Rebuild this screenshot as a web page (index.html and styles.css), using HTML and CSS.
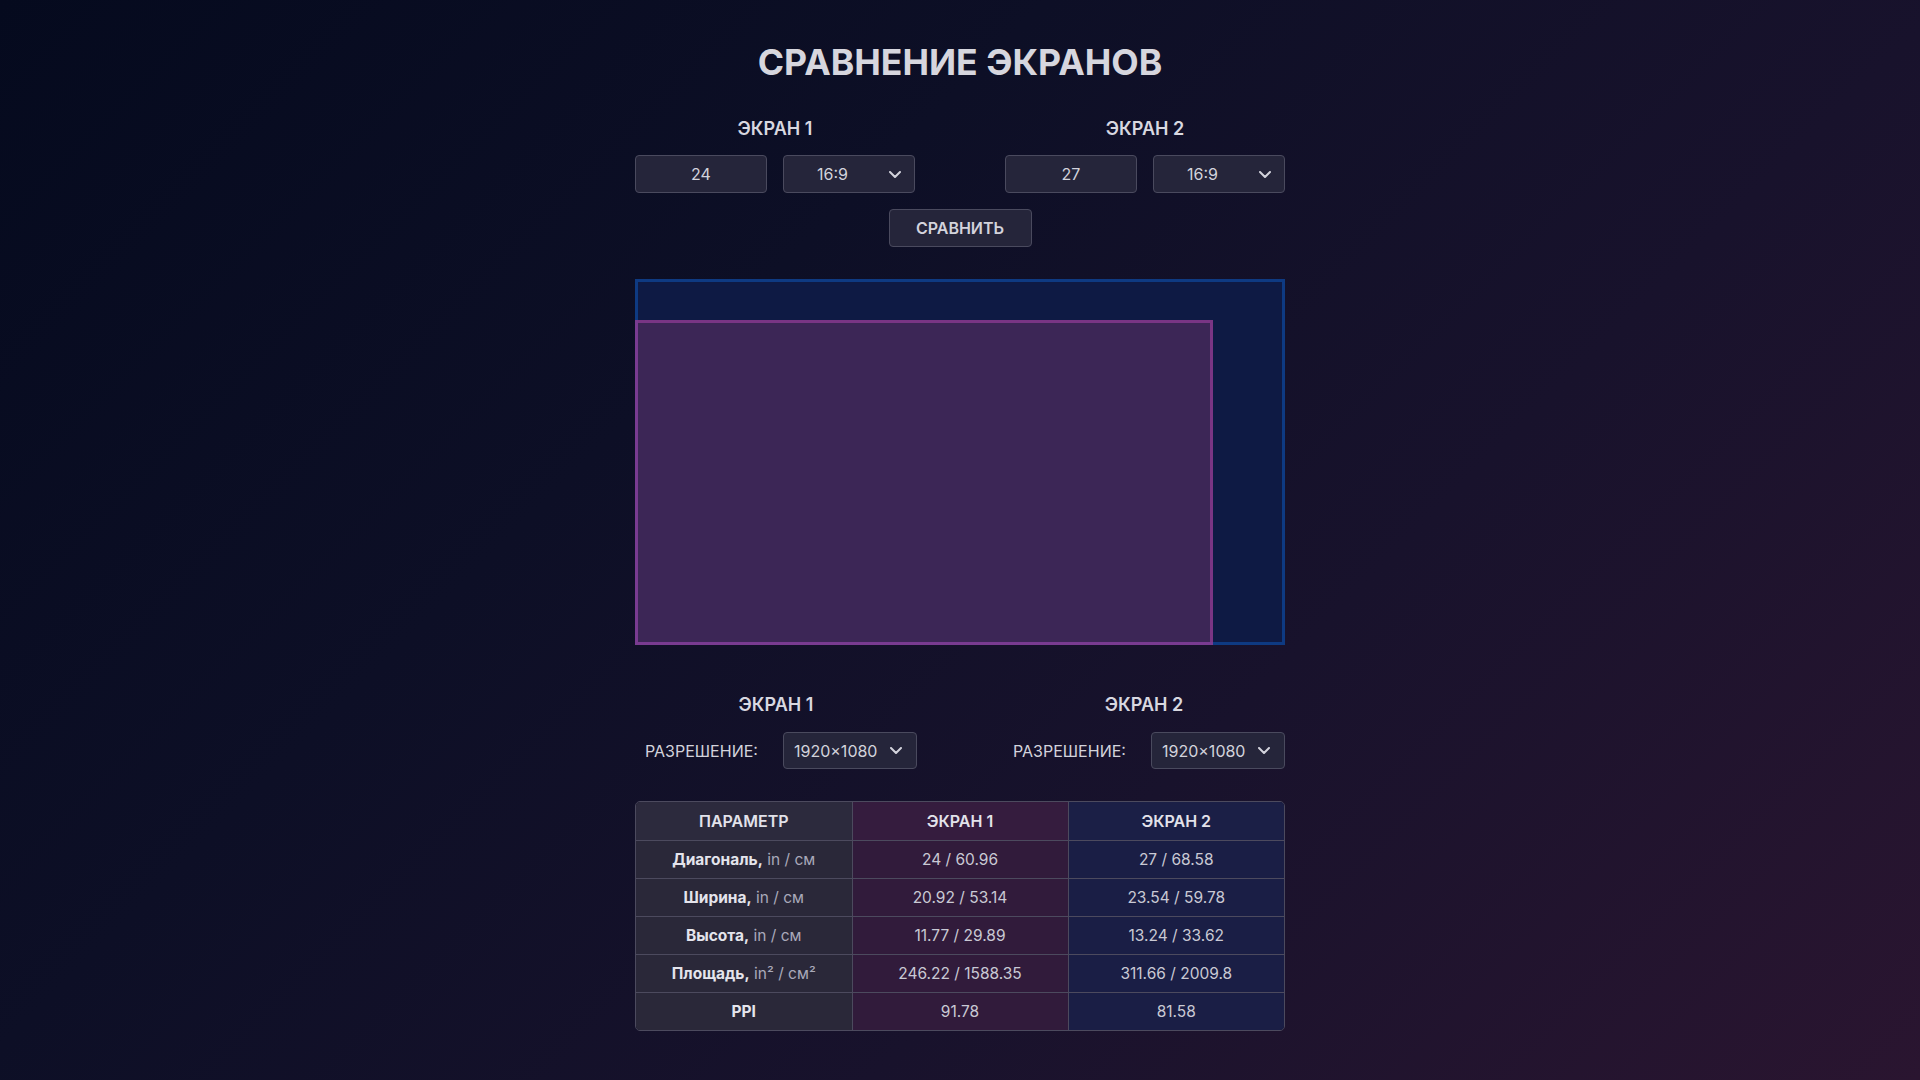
FILE: index.html
```html
<!DOCTYPE html>
<html lang="ru">
<head>
<meta charset="utf-8">
<title>Сравнение экранов</title>
<link rel="stylesheet" href="styles.css">
</head>
<body>
<main class="page">
  <h1 class="title">СРАВНЕНИЕ ЭКРАНОВ</h1>

  <section class="inputs">
    <div class="screen-col">
      <div class="col-label">ЭКРАН 1</div>
      <div class="controls">
        <input class="field" type="text" value="24">
        <div class="select select-ratio"><span class="select-text">16:9</span><svg class="chev" width="12" height="7" viewBox="0 0 12 7"><path d="M1 1l5 5 5-5" fill="none" stroke="currentColor" stroke-width="2" stroke-linecap="round" stroke-linejoin="round"/></svg></div>
      </div>
    </div>
    <div class="screen-col">
      <div class="col-label">ЭКРАН 2</div>
      <div class="controls">
        <input class="field" type="text" value="27">
        <div class="select select-ratio"><span class="select-text">16:9</span><svg class="chev" width="12" height="7" viewBox="0 0 12 7"><path d="M1 1l5 5 5-5" fill="none" stroke="currentColor" stroke-width="2" stroke-linecap="round" stroke-linejoin="round"/></svg></div>
      </div>
    </div>
  </section>

  <div class="btn-row"><button class="btn">СРАВНИТЬ</button></div>

  <div class="canvas">
    <div class="rect rect-2" style="width:650px;height:366px"></div>
    <div class="rect rect-1" style="width:578px;height:325px"></div>
  </div>

  <section class="res">
    <div class="res-col">
      <div class="col-label">ЭКРАН 1</div>
      <div class="res-row">
        <span class="res-label">РАЗРЕШЕНИЕ:</span>
        <div class="select select-res"><span class="select-text">1920×1080</span><svg class="chev" width="12" height="7" viewBox="0 0 12 7"><path d="M1 1l5 5 5-5" fill="none" stroke="currentColor" stroke-width="2" stroke-linecap="round" stroke-linejoin="round"/></svg></div>
      </div>
    </div>
    <div class="res-col">
      <div class="col-label">ЭКРАН 2</div>
      <div class="res-row">
        <span class="res-label">РАЗРЕШЕНИЕ:</span>
        <div class="select select-res"><span class="select-text">1920×1080</span><svg class="chev" width="12" height="7" viewBox="0 0 12 7"><path d="M1 1l5 5 5-5" fill="none" stroke="currentColor" stroke-width="2" stroke-linecap="round" stroke-linejoin="round"/></svg></div>
      </div>
    </div>
  </section>

  <div class="table-wrap">
    <table class="cmp">
      <thead>
        <tr><th class="c-param">ПАРАМЕТР</th><th class="c-s1">ЭКРАН 1</th><th class="c-s2">ЭКРАН 2</th></tr>
      </thead>
      <tbody>
        <tr><td class="c-param"><b>Диагональ,</b> <span class="unit">in / см</span></td><td class="c-s1">24 / 60.96</td><td class="c-s2">27 / 68.58</td></tr>
        <tr><td class="c-param"><b>Ширина,</b> <span class="unit">in / см</span></td><td class="c-s1">20.92 / 53.14</td><td class="c-s2">23.54 / 59.78</td></tr>
        <tr><td class="c-param"><b>Высота,</b> <span class="unit">in / см</span></td><td class="c-s1">11.77 / 29.89</td><td class="c-s2">13.24 / 33.62</td></tr>
        <tr><td class="c-param"><b>Площадь,</b> <span class="unit">in² / см²</span></td><td class="c-s1">246.22 / 1588.35</td><td class="c-s2">311.66 / 2009.8</td></tr>
        <tr><td class="c-param"><b>PPI</b></td><td class="c-s1">91.78</td><td class="c-s2">81.58</td></tr>
      </tbody>
    </table>
  </div>
</main>
</body>
</html>
```

FILE: styles.css
```css
* { box-sizing: border-box; }

html, body {
  margin: 0;
  height: 100%;
}

body {
  min-height: 1080px;
  background: linear-gradient(135deg, #050a1e 0%, #0d0f26 35%, #18122c 65%, #2a1530 100%);
  font-family: Inter, "Noto Sans", sans-serif;
  color: #d3d3dc;
}

.page {
  width: 650px;
  margin: 0 auto;
  padding-top: 41px;
}

.title {
  margin: 0;
  font-size: 35.6px;
  line-height: 44px;
  font-weight: 700;
  text-align: center;
  color: #d6d6de;
}

.inputs {
  display: flex;
  gap: 90px;
  margin-top: 33px;
}

.screen-col {
  width: 280px;
  display: flex;
  flex-direction: column;
  align-items: center;
}

.col-label {
  font-size: 18px;
  line-height: 22px;
  font-weight: 600;
  color: #d8d8e0;
  text-align: center;
}

.controls {
  display: flex;
  gap: 16px;
  margin-top: 15px;
}

.field,
.select,
.btn {
  height: 38px;
  background: #25253a;
  border: 1px solid #4a4a5e;
  border-radius: 4px;
  color: #d3d3dc;
  font-family: Inter, "Noto Sans", sans-serif;
  font-size: 16px;
}

.field {
  width: 132px;
  text-align: center;
  padding: 0;
  outline: none;
}

.select {
  display: flex;
  align-items: center;
}

.select-ratio {
  width: 132px;
  padding-right: 13px;
}

.select-ratio .select-text {
  flex: 1;
  text-align: center;
  padding-right: 8px;
}

.chev {
  display: block;
  color: #d3d3dc;
  flex: none;
}

.btn-row {
  display: flex;
  justify-content: center;
  margin-top: 16px;
}

.btn {
  width: 143px;
  font-weight: 600;
  cursor: pointer;
}

.canvas {
  position: relative;
  width: 650px;
  height: 366px;
  margin-top: 32px;
}

.rect {
  position: absolute;
  left: 0;
  bottom: 0;
  border: 3px solid;
}

.rect-2 {
  background: #0e1a44;
  border-color: #0e3a82;
}

.rect-1 {
  background: rgba(106, 50, 104, 0.5);
  border-color: rgba(165, 64, 165, 0.58);
}

.res {
  display: flex;
  gap: 86px;
  margin-top: 49px;
}

.res-col {
  width: 282px;
  display: flex;
  flex-direction: column;
  align-items: stretch;
}

.res-row {
  display: flex;
  align-items: center;
  justify-content: space-between;
  padding-left: 10px;
  margin-top: 16px;
}

.res-label {
  font-size: 16px;
  color: #d3d3dc;
}

.select-res {
  width: 134px;
  height: 37px;
  padding: 0 14px 0 10px;
  justify-content: space-between;
}

.table-wrap {
  margin-top: 32px;
  border: 1px solid #4c4a5e;
  border-radius: 5px;
  overflow: hidden;
}

.cmp {
  width: 100%;
  border-collapse: collapse;
  table-layout: fixed;
  font-size: 15.5px;
}

.cmp th,
.cmp td {
  height: 38px;
  padding: 0;
  text-align: center;
  vertical-align: middle;
  width: 33.333%;
}

.cmp tbody tr td {
  border-top: 1px solid #4c4a5e;
}

.cmp th + th,
.cmp td + td {
  border-left: 1px solid #4c4a5e;
}

.cmp th {
  font-weight: 600;
  font-size: 16px;
  color: #e2e2ea;
}

.cmp td {
  color: #c9c9d4;
}

.cmp b {
  font-weight: 700;
  color: #e4e4ec;
}

.unit {
  color: #a9a9b9;
}

.c-param { background: #2a2839; }
.c-s1 { background: #311b3b; }
.c-s2 { background: #1a1e45; }

.cmp th.c-param { background: #2c2a3d; }
.cmp th.c-s1 { background: #351c3e; }
.cmp th.c-s2 { background: #1b1f46; }
```
